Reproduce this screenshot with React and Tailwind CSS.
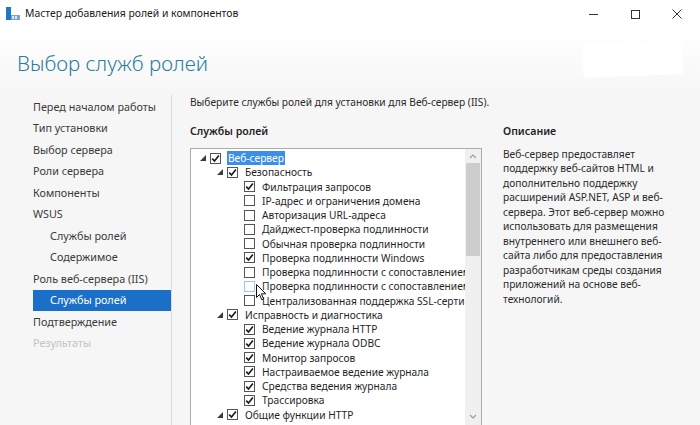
import React from "react";

const F = { fontFamily: '"Noto Sans", "Open Sans", sans-serif' };

function Tri() {
  return (
    <svg width="6" height="6" viewBox="0 0 6 6" className="shrink-0">
      <polygon points="6,0 6,6 0,6" fill="#3c3c3c" />
    </svg>
  );
}

function Box({ checked, hover }) {
  return (
    <span
      className={
        "w-[11px] h-[11px] shrink-0 border flex items-center justify-center bg-white " +
        (hover ? "border-[#9cc6e8]" : "border-[#555555]")
      }
    >
      {checked && (
        <svg width="9" height="9" viewBox="0 0 9 9">
          <path d="M1.2 4.6 L3.5 7 L7.9 1.4" fill="none" stroke="#1a1a1a" strokeWidth="1.6" />
        </svg>
      )}
    </span>
  );
}

const rows = [
  { l: 0, t: "Веб-сервер", c: true, exp: true, sel: true },
  { l: 1, t: "Безопасность", c: true, exp: true },
  { l: 2, t: "Фильтрация запросов", c: true },
  { l: 2, t: "IP-адрес и ограничения домена" },
  { l: 2, t: "Авторизация URL-адреса" },
  { l: 2, t: "Дайджест-проверка подлинности" },
  { l: 2, t: "Обычная проверка подлинности" },
  { l: 2, t: "Проверка подлинности Windows", c: true },
  { l: 2, t: "Проверка подлинности с сопоставлением" },
  { l: 2, t: "Проверка подлинности с сопоставлением", hover: true },
  { l: 2, t: "Централизованная поддержка SSL-серти" },
  { l: 1, t: "Исправность и диагностика", c: true, exp: true },
  { l: 2, t: "Ведение журнала HTTP", c: true },
  { l: 2, t: "Ведение журнала ODBC", c: true },
  { l: 2, t: "Монитор запросов", c: true },
  { l: 2, t: "Настраиваемое ведение журнала", c: true },
  { l: 2, t: "Средства ведения журнала", c: true },
  { l: 2, t: "Трассировка", c: true },
  { l: 1, t: "Общие функции HTTP", c: true, exp: true },
];

const pad = ["pl-[9px]", "pl-[26px]", "pl-[43px]"];

const nav = [
  { t: "Перед началом работы" },
  { t: "Тип установки" },
  { t: "Выбор сервера" },
  { t: "Роли сервера" },
  { t: "Компоненты" },
  { t: "WSUS" },
  { t: "Службы ролей", sub: true },
  { t: "Содержимое", sub: true },
  { t: "Роль веб-сервера (IIS)" },
  { t: "Службы ролей", sub: true, active: true },
  { t: "Подтверждение" },
  { t: "Результаты", dim: true },
];

export default function App() {
  return (
    <div className="w-[700px] h-[425px] overflow-hidden bg-[#f6f6f6] flex flex-col text-[#262626]" style={F}>
      {/* title bar */}
      <div className="h-[28px] shrink-0 bg-white flex items-center relative">
        <svg width="14" height="14" viewBox="0 0 14 14" className="ml-[6px]">
          <rect x="0" y="0" width="5" height="13" fill="#1e78c8" />
          <rect x="5" y="8" width="9" height="5" fill="#7fa6c4" />
          <rect x="6" y="9" width="2" height="3" fill="#d8e6f2" />
          <rect x="9" y="9" width="2" height="3" fill="#d8e6f2" />
        </svg>
        <span className="ml-[5px] text-[10.4px] text-[#1a1a1a]">Мастер добавления ролей и компонентов</span>
        <div className="ml-auto flex items-center h-full">
          <div className="w-[42px] h-full flex items-center justify-center">
            <div className="w-[9px] h-px bg-[#333]" />
          </div>
          <div className="w-[42px] h-full flex items-center justify-center">
            <div className="w-[9px] h-[9px] border border-[#333]" />
          </div>
          <div className="w-[42px] h-full flex items-center justify-center mr-[2px]">
            <svg width="10" height="10" viewBox="0 0 10 10">
              <path d="M0.5 0.5 L9.5 9.5 M9.5 0.5 L0.5 9.5" stroke="#333" strokeWidth="1" />
            </svg>
          </div>
        </div>
      </div>
      {/* header */}
      <div className="h-[67px] shrink-0 bg-gradient-to-b from-white to-[#f6f6f6] relative">
        <div className="pl-[17px] pt-[20px] text-[20.5px] leading-[30px] text-[#2a7d9c] font-light">
          Выбор служб ролей
        </div>
        <div className="absolute left-[583px] top-[14px] w-[100px] h-[34px] bg-white rounded-[3px] -rotate-2" />
      </div>
      {/* body */}
      <div className="flex flex-1 min-h-0">
        <div className="w-[172px] shrink-0 border-r border-[#dcdcdc] pt-[1px] text-[10.8px]">
          {nav.map((n, i) => (
            <div
              key={i}
              className={
                "ml-[33px] h-[21.5px] flex items-center " +
                (n.sub ? "pl-[17px] " : "") +
                (n.active ? "bg-[#1a6fc9] text-white " : n.dim ? "text-[#c4c4c4] " : "text-[#3a3a3a] ")
              }
            >
              {n.t}
            </div>
          ))}
        </div>
        <div className="flex-1 min-w-0 pl-[18px] relative">
          <div className="h-[15px] flex items-center text-[10.2px] text-[#2a2a2a]">
            Выберите службы ролей для установки для Веб-сервер (IIS).
          </div>
          <div className="flex mt-[13px] gap-[21px]">
            <div className="w-[292px] shrink-0">
              <div className="h-[17px] flex items-center text-[10.6px] font-semibold text-[#1f1f1f]">Службы ролей</div>
              <div className="mt-[8px] h-[300px] border border-[#acacac] bg-white flex">
                <div className="flex-1 min-w-0 overflow-hidden pt-[2px]">
                  {rows.map((r, i) => (
                    <div key={i} className={"h-[14.25px] flex items-center whitespace-nowrap " + pad[r.l]}>
                      <span className="w-[10px] shrink-0 flex items-center">{r.exp && <Tri />}</span>
                      <Box checked={r.c} hover={r.hover} />
                      <span className="ml-[6px] min-w-0 flex-1 overflow-hidden flex">
                        <span
                          className={
                            "px-[1px] text-[10.2px] leading-[14px] " +
                            (r.sel ? "bg-[#3b8fe6] text-white" : "text-[#1f1f1f]")
                          }
                        >
                          {r.t}
                        </span>
                      </span>
                    </div>
                  ))}
                </div>
                <div className="w-[16px] shrink-0 bg-[#f0f0f0] flex flex-col items-center">
                  <svg width="8" height="5" viewBox="0 0 8 5" className="mt-[5px]">
                    <path d="M1 4 L4 1 L7 4" fill="none" stroke="#9a9a9a" strokeWidth="1.2" />
                  </svg>
                  <div className="mt-[4px] w-[14px] h-[93px] bg-[#cdcdcd]" />
                  <div className="flex-1" />
                  <svg width="8" height="5" viewBox="0 0 8 5" className="mb-[28px]">
                    <path d="M1 1 L4 4 L7 1" fill="none" stroke="#9a9a9a" strokeWidth="1.2" />
                  </svg>
                </div>
              </div>
            </div>
            <div className="w-[190px] shrink-0">
              <div className="h-[17px] flex items-center text-[10.6px] font-semibold text-[#1f1f1f]">Описание</div>
              <div className="mt-[7px] text-[10.2px] leading-[14.45px] text-[#2a2a2a] whitespace-nowrap">
                Веб-сервер предоставляет<br />
                поддержку веб-сайтов HTML и<br />
                дополнительно поддержку<br />
                расширений ASP.NET, ASP и веб-<br />
                сервера. Этот веб-сервер можно<br />
                использовать для размещения<br />
                внутреннего или внешнего веб-<br />
                сайта либо для предоставления<br />
                разработчикам среды создания<br />
                приложений на основе веб-<br />
                технологий.
              </div>
            </div>
          </div>
          {/* cursor */}
          <svg width="11" height="17" viewBox="0 0 11 17" className="absolute left-[84px] top-[189px]">
            <path d="M0.5 0.5 L0.5 13.5 L3.5 10.5 L5.8 15.8 L7.6 15 L5.4 9.8 L9.8 9.8 Z" fill="#fff" stroke="#111" strokeWidth="1" />
          </svg>
        </div>
      </div>
    </div>
  );
}
